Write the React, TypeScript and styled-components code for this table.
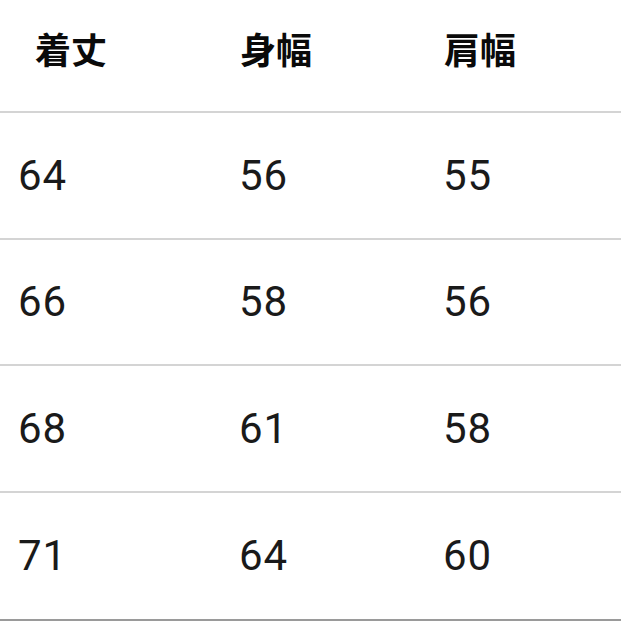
import React from 'react';
import styled, { createGlobalStyle } from 'styled-components';

const GlobalStyle = createGlobalStyle`
  html, body {
    margin: 0;
    padding: 0;
    background: #ffffff;
  }
`;

const Table = styled.div`
  width: 621px;
  height: 621px;
  overflow: hidden;
  background: #ffffff;
  font-family: Roboto, "Liberation Sans", "Noto Sans CJK JP", sans-serif;
`;

const Row = styled.div<{ $height: number; $last?: boolean }>`
  display: grid;
  grid-template-columns: 221px 204px 1fr;
  padding-left: 18px;
  height: ${p => p.$height}px;
  box-sizing: border-box;
  border-bottom: 2px solid ${p => (p.$last ? '#9a9a9a' : '#d4d4d4')};
`;

const HeadCell = styled.div<{ $indent?: number }>`
  padding-top: 30px;
  padding-left: ${p => p.$indent ?? 0}px;
  font-family: "Noto Sans CJK JP", "Noto Sans CJK SC", sans-serif;
  font-weight: 700;
  font-size: 36px;
  line-height: 36px;
  color: #0a0a0a;
`;

const Cell = styled.div`
  display: flex;
  align-items: center;
  font-size: 42px;
  font-weight: 400;
  letter-spacing: 1px;
  color: #1a1a1a;
`;

const headers = ['着丈', '身幅', '肩幅'];

const rows = [
  ['64', '56', '55'],
  ['66', '58', '56'],
  ['68', '61', '58'],
  ['71', '64', '60'],
];

export default function App() {
  return (
    <>
      <GlobalStyle />
      <Table>
        <Row $height={113}>
          {headers.map((h, i) => (
            <HeadCell key={h} $indent={i === 0 ? 17 : 1}>
              {h}
            </HeadCell>
          ))}
        </Row>
        {rows.map((r, idx) => {
          const last = idx === rows.length - 1;
          return (
            <Row key={idx} $height={last ? 128 : 126.5} $last={last}>
              {r.map((v, i) => (
                <Cell key={i}>{v}</Cell>
              ))}
            </Row>
          );
        })}
      </Table>
    </>
  );
}
